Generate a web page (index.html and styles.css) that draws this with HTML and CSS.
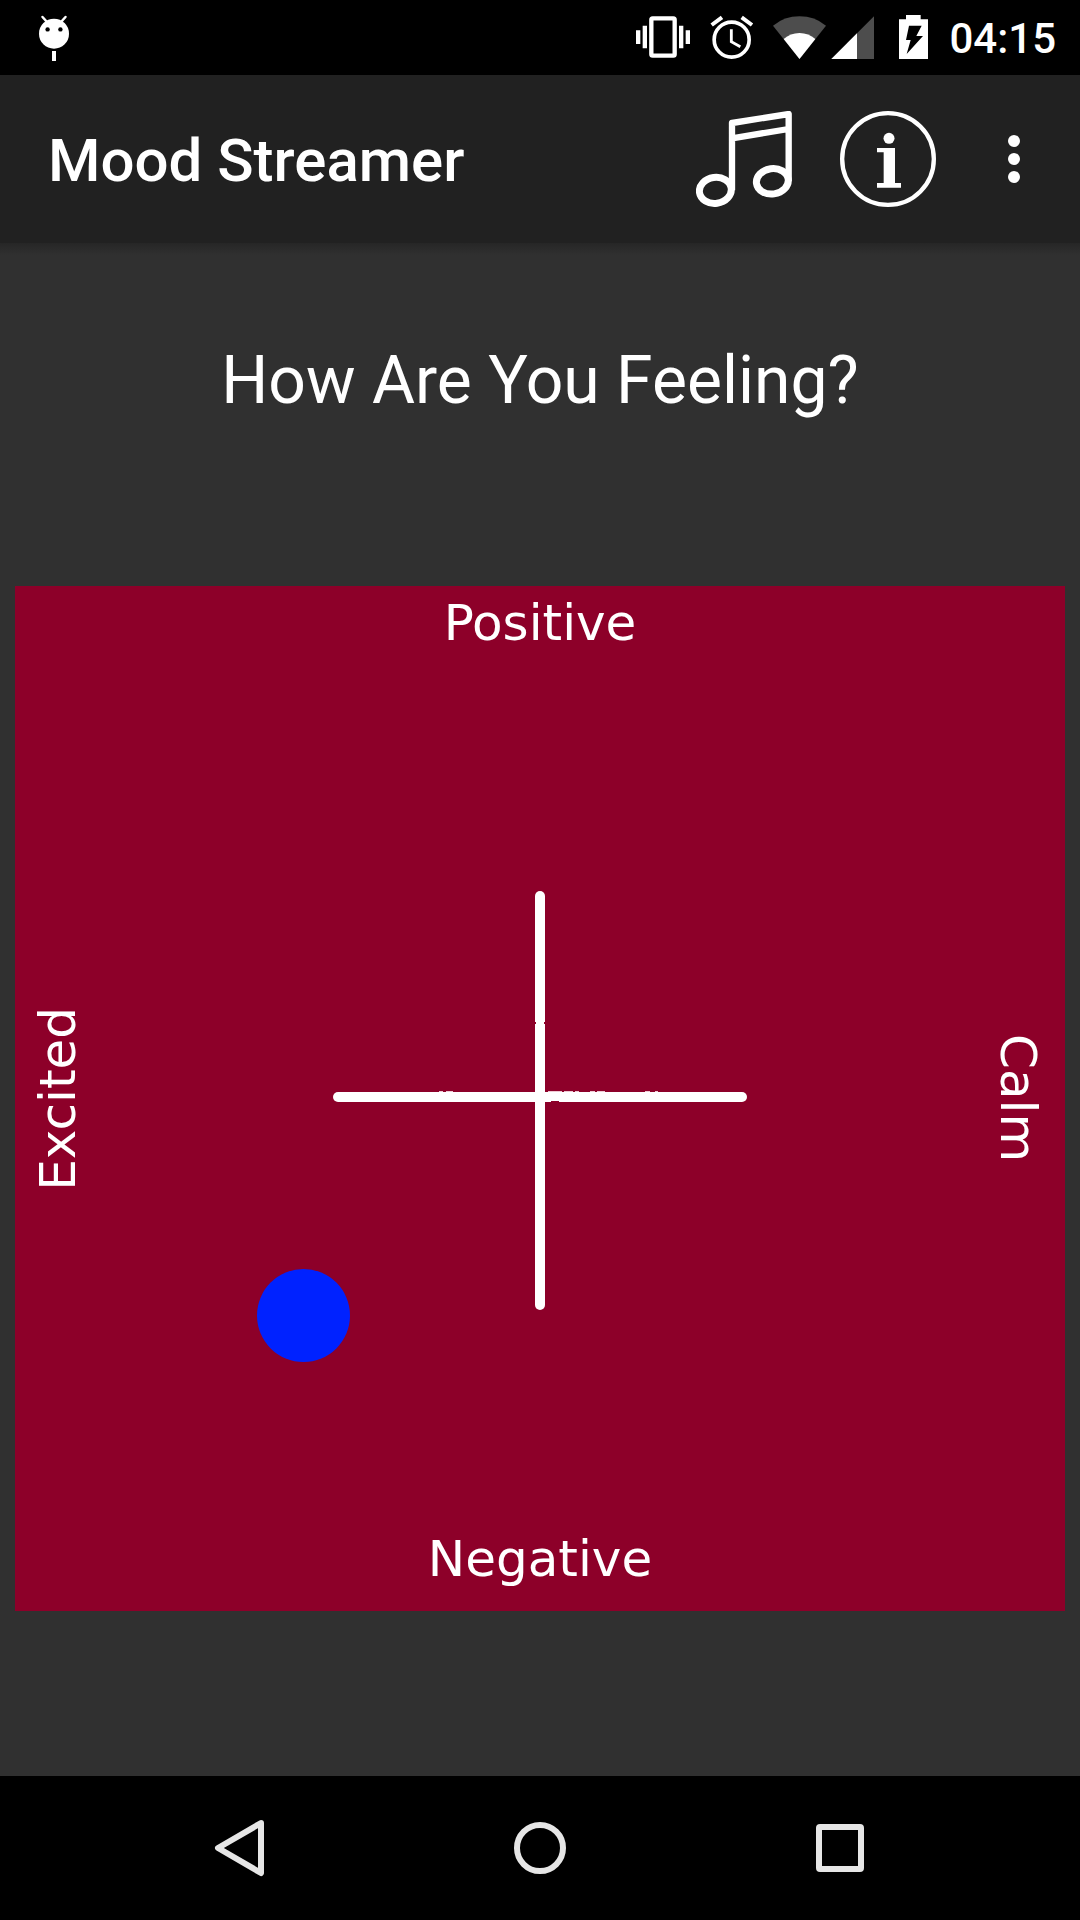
FILE: index.html
```html
<!DOCTYPE html>
<html lang="en">
<head>
<meta charset="utf-8">
<meta name="viewport" content="width=device-width, initial-scale=1">
<title>Mood Streamer</title>
<link rel="stylesheet" href="styles.css">
</head>
<body>
<div class="status-bar">
  <svg class="debug-icon" viewBox="0 0 48 75" aria-hidden="true">
    <circle cx="24" cy="33.7" r="15" fill="#fff"/>
    <path d="M12.5 17l5 5.500M35.500 17l-5 5.500" stroke="#fff" stroke-width="2.500" stroke-linecap="round"/>
    <circle cx="17.600" cy="29.400" r="2.200"/>
    <circle cx="30.400" cy="29.400" r="2.200"/>
    <rect x="22" y="51" width="4" height="10" fill="#fff"/>
  </svg>
  <div class="status-icons">
    <svg class="icon-vibrate" viewBox="30 0 210 225" aria-hidden="true">
      <path d="M48 91h13v41H48zM68 77h13v68H68zM177 77h13v68h-13zM197 91h13v41h-13z" fill="#fff"/>
      <rect x="94" y="55" width="70" height="112" rx="4" fill="none" stroke="#fff" stroke-width="13"/>
    </svg>
    <svg class="icon-alarm" viewBox="240 0 195 225" aria-hidden="true">
      <circle cx="335" cy="119" r="52.500" fill="none" stroke="#fff" stroke-width="11"/>
      <path d="M334 88v37l27 15" fill="none" stroke="#fff" stroke-width="8.500"/>
      <path d="M275 75l31-23M365 52l31 23" stroke="#fff" stroke-width="12"/>
    </svg>
    <svg class="icon-wifi" viewBox="435 0 195 225" aria-hidden="true">
      <path d="M538.500 177L459 77Q493 49 538.500 49T618 77z" fill="#4d4d4d"/>
      <path d="M538.500 177L491 117Q511 99 538.500 99T586 117z" fill="#fff"/>
    </svg>
    <svg class="icon-signal" viewBox="630 0 165 225" aria-hidden="true">
      <path d="M762 49v128H634z" fill="#4d4d4d"/>
      <path d="M711 100v77H634z" fill="#fff"/>
    </svg>
    <svg class="icon-battery" viewBox="795 0 165 225" aria-hidden="true">
      <path d="M858 45h44v13h22v119h-87V58h21z" fill="#fff"/>
      <path d="M867 77h38l-16 31h20l-49 54 12-42h-14z"/>
    </svg>
    <time class="clock">04:15</time>
  </div>
</div>

<header class="app-bar">
  <h1 class="app-title">Mood Streamer</h1>
  <button class="action" type="button" aria-label="Music">
    <svg viewBox="0 0 288 288" fill="none" stroke="#fff" stroke-width="19" stroke-linejoin="round">
      <ellipse cx="58" cy="238" rx="48" ry="39" stroke-width="21" transform="rotate(-8 58 238)"/>
      <ellipse cx="229" cy="211" rx="48" ry="38" stroke-width="21" transform="rotate(-8 229 211)"/>
      <path d="M108 238V36L278 9v202M108 82L278 54"/>
    </svg>
  </button>
  <button class="action" type="button" aria-label="Information">
    <svg viewBox="0 0 288 288" fill="#fff">
      <circle cx="144" cy="144" r="137.500" fill="none" stroke="#fff" stroke-width="13"/>
      <circle cx="147" cy="82" r="16.500"/>
      <path d="M111 111h54v105h18v14h-72v-14h20v-92h-20z"/>
    </svg>
  </button>
  <button class="action action-more" type="button" aria-label="More options">
    <svg viewBox="0 0 96 96" fill="#fff">
      <circle cx="48" cy="30" r="6"/><circle cx="48" cy="48" r="6"/><circle cx="48" cy="66" r="6"/>
    </svg>
  </button>
</header>

<main class="content">
  <h2 class="question">How Are You Feeling?</h2>
  <section class="mood-pad" aria-label="Mood">
    <svg class="axes" viewBox="0 0 1050 1025" aria-hidden="true">
      <rect x="520" y="305" width="10" height="419" rx="5" fill="#fff"/>
      <rect x="318" y="506" width="414" height="10" rx="5" fill="#fff"/>
      <path d="M424 505.500h4m3 0h7m95 0h14m2 0h9m2 0h4m11 0h5m2 0h8m40 0h5m5 0h3" stroke="#f0c8d3"/>
      <path d="M520 436h1v2h-1zM529 436h1v2h-1zM536 515h8v1h-8z" fill="#8d0029"/>
    </svg>
    <span class="label label-top">Positive</span>
    <span class="label label-left">Excited</span>
    <span class="label label-right">Calm</span>
    <span class="label label-bottom">Negative</span>
    <button class="marker" type="button" aria-label="Current mood"></button>
  </section>
</main>

<nav class="nav-bar" aria-label="System">
  <button class="nav-button" type="button" aria-label="Back">
    <svg viewBox="0 0 72 72"><path d="M57 11L14 36l43 25z"/></svg>
  </button>
  <button class="nav-button" type="button" aria-label="Home">
    <svg viewBox="0 0 72 72"><circle cx="36" cy="36" r="23"/></svg>
  </button>
  <button class="nav-button" type="button" aria-label="Recent apps">
    <svg viewBox="0 0 72 72"><rect x="15" y="15" width="42" height="42" rx="1"/></svg>
  </button>
</nav>
</body>
</html>
```

FILE: styles.css
```css
* {
  box-sizing: border-box;
}

body {
  margin: 0;
  min-height: 100vh;
  display: flex;
  flex-direction: column;
  background: #303030;
  color: #fff;
  font-family: Roboto, sans-serif;
}

button {
  padding: 0;
  border: 0;
  background: none;
  color: inherit;
}

svg {
  display: block;
}

.status-bar {
  display: flex;
  justify-content: space-between;
  height: 75px;
  padding: 0 24px 0 30px;
  background: #000;
}

.debug-icon {
  width: 48px;
  height: 75px;
}

.status-icons {
  display: flex;
  align-items: center;
}

.status-icons svg {
  height: 75px;
}

.icon-vibrate {
  width: 70px;
}

.icon-alarm,
.icon-wifi {
  width: 65px;
}

.icon-signal,
.icon-battery {
  width: 55px;
}

.clock {
  padding: 2px 0 0 9px;
  font-size: 42px;
  font-weight: 500;
  line-height: 75px;
}

.app-bar {
  display: flex;
  align-items: center;
  height: 168px;
  padding: 0 12px 0 48px;
  background: #212121;
}

.app-title {
  flex: 1;
  margin: 0;
  padding-top: 4px;
  font-size: 60px;
  font-weight: 500;
  line-height: 72px;
}

.action {
  display: grid;
  place-items: center;
  width: 144px;
  height: 144px;
}

.action-more {
  width: 108px;
}

.action svg {
  width: 96px;
  height: 96px;
}

.content {
  flex: 1;
  padding: 99px 15px 0;
  background: linear-gradient(#262626, #303030 12px);
}

.question {
  margin: 0 0 166px;
  font-size: 66px;
  font-weight: 400;
  line-height: 78px;
  text-align: center;
}

.mood-pad {
  position: relative;
  display: grid;
  grid-template-columns: 64px 1fr 64px;
  grid-template-rows: 1fr 1fr;
  aspect-ratio: 1050 / 1025;
  padding: 0 13px;
  background: #8d0029;
}

.axes {
  position: absolute;
  inset: 0;
  width: 100%;
  height: 100%;
}

.label {
  place-self: center;
  font-family: Verdana, "DejaVu Sans", sans-serif;
  font-size: 50px;
  line-height: 60px;
}

.label-top {
  grid-area: 1 / 2;
  align-self: start;
  padding-top: 7px;
}

.label-bottom {
  grid-area: 2 / 2;
  align-self: end;
  padding-bottom: 22px;
}

.label-left {
  grid-area: 1 / 1 / 3 / 2;
  justify-self: start;
  writing-mode: vertical-rl;
  transform: rotate(180deg);
}

.label-right {
  grid-area: 1 / 3 / 3 / 4;
  justify-self: start;
  writing-mode: vertical-rl;
}

.marker {
  position: absolute;
  left: 23%;
  top: 66.6%;
  width: 93px;
  height: 93px;
  border-radius: 50%;
  background: #0022ff;
}

.nav-bar {
  display: flex;
  justify-content: center;
  height: 144px;
  background: #000;
}

.nav-button {
  display: grid;
  place-items: center;
  width: 300px;
}

.nav-button svg {
  width: 72px;
  height: 72px;
  fill: none;
  stroke: #e6e6e6;
  stroke-width: 6;
  stroke-linejoin: round;
}
```
